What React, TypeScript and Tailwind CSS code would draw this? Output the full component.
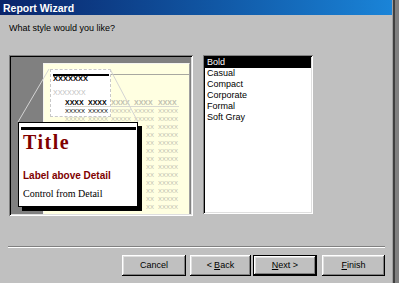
import React from "react";

const sunken =
  "shadow-[inset_1px_1px_0_#808080,inset_-1px_-1px_0_#ffffff,inset_2px_2px_0_#000000,inset_-2px_-2px_0_#dfdfdf]";
const raised =
  "shadow-[inset_-1px_-1px_0_#000000,inset_1px_1px_0_#ffffff,inset_-2px_-2px_0_#808080,inset_2px_2px_0_#dfdfdf]";

function Btn({ children, w, def }: { children: React.ReactNode; w: string; def?: boolean }) {
  return (
    <div className={`${w} h-[21px] ${def ? "border border-black" : ""} flex`}>
      <div className={`flex-1 flex items-center justify-center ${raised} text-[9px] text-black`}>{children}</div>
    </div>
  );
}

export default function App() {
  const hidden = Array.from({ length: 11 }, (_, i) => i);
  const items = ["Bold", "Casual", "Compact", "Corporate", "Formal", "Soft Gray"];
  return (
    <div className="flex w-[399px] h-[283px] overflow-hidden bg-[#c0c0c0] font-['Liberation_Sans',Arial,sans-serif]">
      <div className="w-[392px] flex flex-col">
        <div className="h-[15px] bg-linear-to-r from-[#0a246a] to-[#1a84d8] flex items-center pl-[3px]">
          <span className="text-white font-bold text-[10.5px] leading-[12px]">Report Wizard</span>
        </div>
        <div className="flex-1 flex flex-col">
          <div className="mt-[8px] ml-[9px] text-[9px] leading-[11px] text-black">What style would you like?</div>
          <div className="mt-[21px] ml-[9px] flex items-start">
            <div className={`w-[184px] h-[161px] p-[2px] bg-[#808080] ${sunken}`}>
              <div className="relative w-full h-full overflow-hidden bg-[#808080]">
                {/* page */}
                <div className="absolute left-[32px] top-[6px] w-[147px] bottom-0 bg-[#ffffe1] border-t border-l border-[#f4f4f0] border-r-[#a0a0a0] border-r">
                  <div className="absolute left-[6px] top-[5px] w-[61px] h-[48px] bg-white border border-dashed border-[#c8c8c8]" />
                  <div className="absolute left-[9px] top-[10px] w-[56px] h-[2px] bg-black" />
                  <div className="absolute left-[67px] top-[10px] right-0 h-px bg-[#a8a8a0]" />
                  <div className="absolute left-[9px] top-[11px] text-[7.5px] leading-[8px] font-bold text-black">XXXXXXX</div>
                  <div className="absolute left-[9px] top-[25px] text-[7px] leading-[8px] text-[#c0c0c0]">XXXXXXX</div>
                  <div className="absolute left-[21px] top-[42px] w-[114px] h-px bg-[#d8d8d0]" />
                  <div className="absolute left-[21px] top-[35px] flex flex-col">
                    <div className="flex h-[8px] text-[7px] leading-[8px] font-bold">
                      <span className="w-[23px] text-black">XXXX</span>
                      <span className="w-[23px] text-black">XXXX</span>
                      <span className="w-[23px] text-[#c0c0b0]">XXXX</span>
                      <span className="w-[24px] text-[#c0c0b0]">XXXX</span>
                      <span className="w-[23px] text-[#c0c0b0]">XXXX</span>
                    </div>
                    <div className="flex h-[8px] text-[6px] leading-[8px]">
                      <span className="w-[23px] text-black">XXXXX</span>
                      <span className="w-[23px] text-black">XXXXX</span>
                      <span className="w-[23px] text-[#c0c0b0]">XXXXX</span>
                      <span className="w-[24px] text-[#c0c0b0]">XXXXX</span>
                      <span className="w-[23px] text-[#c0c0b0]">XXXXX</span>
                    </div>
                    <div className="flex h-[8px] text-[6px] leading-[8px] text-[#c0c0b0]">
                      <span className="w-[23px]">XXXXX</span>
                      <span className="w-[23px]">XXXXX</span>
                      <span className="w-[23px]">XXXXX</span>
                      <span className="w-[24px]">XXXXX</span>
                      <span className="w-[23px]">XXXXX</span>
                    </div>
                    {hidden.map((r) => (
                      <div key={r} className="flex h-[8px] text-[6px] leading-[8px] text-[#c0c0b0]">
                        <span className="ml-[81px] w-[12px]">XX</span>
                        <span className="w-[23px]">XXXXX</span>
                      </div>
                    ))}
                  </div>
                </div>
                <svg className="absolute left-0 top-0" width="180" height="157">
                  <line x1="38" y1="12" x2="7" y2="65" stroke="#d4d4d4" strokeWidth="1" />
                  <line x1="99" y1="12" x2="127" y2="65" stroke="#d4d4d4" strokeWidth="1" />
                </svg>
                {/* popup */}
                <div className="absolute left-[7px] top-[65px] w-[120px] h-[85px] bg-white border border-black shadow-[4px_4px_0_#000000] flex flex-col">
                  <div className="mt-[4px] ml-[2px] mr-[1px] h-[3px] bg-black" />
                  <div className="mt-[2px] pl-[4px] h-[20px] text-[20px] leading-[20px] font-bold tracking-[1.5px] text-[#800000] font-['Liberation_Serif','Times_New_Roman',serif]">
                    Title
                  </div>
                  <div className="mt-[18px] pl-[4px] text-[10px] leading-[12px] font-bold text-[#800000] font-['Liberation_Sans',Arial,sans-serif]">
                    Label above Detail
                  </div>
                  <div className="mt-[6px] pl-[4px] text-[10px] leading-[12px] text-black font-['Liberation_Serif','Times_New_Roman',serif]">
                    Control from Detail
                  </div>
                </div>
              </div>
            </div>
            <div className={`ml-[10px] w-[110px] h-[159px] p-[2px] bg-white ${sunken}`}>
              <div className="flex flex-col">
                {items.map((it, i) => (
                  <div
                    key={it}
                    className={`h-[11px] leading-[11px] text-[9px] pl-[2px] ${i === 0 ? "bg-black text-white" : "text-black"}`}
                  >
                    {it}
                  </div>
                ))}
              </div>
            </div>
          </div>
          <div className="mt-[30px] ml-[8px] w-[377px] h-[2px] border-t border-t-[#808080] border-b border-b-white" />
          <div className="mt-[7px] ml-[122px] flex">
            <Btn w="w-[64px]">Cancel</Btn>
            <div className="w-[4px]" />
            <Btn w="w-[61px]">
              &lt; <span className="underline ml-[2px]">B</span>ack
            </Btn>
            <div className="w-[2px]" />
            <Btn w="w-[64px]" def>
              <span className="underline">N</span>ext &gt;
            </Btn>
            <div className="w-[5px]" />
            <Btn w="w-[63px]">
              <span className="underline">F</span>inish
            </Btn>
          </div>
        </div>
      </div>
      <div className="flex h-full">
        <div className="w-px bg-[#a0a0a0]" />
        <div className="w-[2px] bg-[#404040]" />
        <div className="w-[4px] bg-[#808080]" />
      </div>
    </div>
  );
}
